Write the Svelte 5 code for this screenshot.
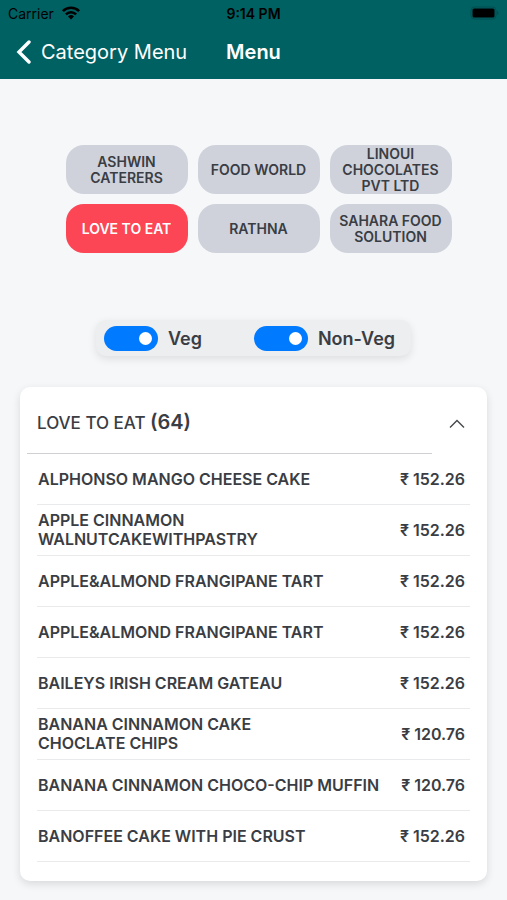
<script>
  const caterers = [
    'ASHWIN CATERERS',
    'FOOD WORLD',
    'LINOUI CHOCOLATES PVT LTD',
    'LOVE TO EAT',
    'RATHNA',
    'SAHARA FOOD SOLUTION'
  ];
  const items = [
    ['ALPHONSO MANGO CHEESE CAKE', '152.26'],
    ['APPLE CINNAMON\nWALNUTCAKEWITHPASTRY', '152.26'],
    ['APPLE&ALMOND FRANGIPANE TART', '152.26'],
    ['APPLE&ALMOND FRANGIPANE TART', '152.26'],
    ['BAILEYS IRISH CREAM GATEAU', '152.26'],
    ['BANANA CINNAMON CAKE\nCHOCLATE CHIPS', '120.76'],
    ['BANANA CINNAMON CHOCO-CHIP MUFFIN', '120.76'],
    ['BANOFFEE CAKE WITH PIE CRUST', '152.26']
  ];
  let selected = $state('LOVE TO EAT');
  let open = $state(true);
  let veg = $state(true);
  let nonVeg = $state(true);
</script>

<div class="screen">
  <header>
    <div class="status">
      <span class="carrier">
        Carrier
        <svg width="20" height="14" viewBox="0 0 20 14" aria-hidden="true">
          <g fill="none" stroke="#000" stroke-width="2.6">
            <path d="M1.9 5.1a11.5 11.5 0 0 1 16.2 0" />
            <path d="M4.9 8.3a7.2 7.2 0 0 1 10.2 0" />
          </g>
          <path d="M10 13.4 7 10.4a4.3 4.3 0 0 1 6 0z" />
        </svg>
      </span>
      <span class="time">9:14 PM</span>
      <svg class="battery" width="29" height="14" viewBox="0 0 29 14" aria-hidden="true">
        <rect x="1" y="1" width="25" height="12" rx="3.5" fill="none" stroke="#004d4f" />
        <rect x="2.5" y="2.5" width="22" height="9" rx="1.5" />
        <path d="M27 5v4q1.500-.6 1.500-2t-1.500-2z" fill="#004d4f" />
      </svg>
    </div>
    <nav>
      <a href="#categories">
        <svg width="15" height="24" viewBox="0 0 15 24" aria-hidden="true">
          <path d="M13 2 3 12 13 22" fill="none" stroke="#fff" stroke-width="3.4" stroke-linecap="round" stroke-linejoin="miter" />
        </svg>
        Category Menu
      </a>
      <h1>Menu</h1>
    </nav>
  </header>

  <main>
    <div class="caterers">
      {#each caterers as name}
        <button class="chip" class:active={name === selected} onclick={() => (selected = name)}>{name}</button>
      {/each}
    </div>

    <div class="filters">
      <label><input type="checkbox" bind:checked={veg} />Veg</label>
      <label><input type="checkbox" bind:checked={nonVeg} />Non-Veg</label>
    </div>

    <section class="card">
      <button class="heading" aria-expanded={open} onclick={() => (open = !open)}>
        <span class="title">LOVE TO EAT <span class="count">(64)</span></span>
        <svg class:closed={!open} width="16" height="10" viewBox="0 0 16 10" aria-hidden="true">
          <path d="M1 8.500 8 1.500 15 8.500" fill="none" stroke="#45484c" stroke-width="1.400" />
        </svg>
      </button>
      {#if open}
        <ul>
          {#each items as [name, price]}
            <li><span class="name">{name}</span><span class="price">₹ {price}</span></li>
          {/each}
        </ul>
      {/if}
    </section>
  </main>
</div>

<style>
  :global(body) {
    margin: 0;
    background: #f5f7f9;
  }
  .screen {
    font-family: Inter, 'Liberation Sans', sans-serif;
    color: #3a3d43;
  }
  button {
    font: inherit;
    color: inherit;
    border: 0;
    cursor: pointer;
  }
  header {
    background: #006163;
    padding-bottom: 1px;
  }
  .status,
  nav {
    display: grid;
    grid-template-columns: 1fr auto 1fr;
    align-items: center;
  }
  .status {
    height: 26px;
    padding: 0 8px;
    font-size: 14px;
    color: #000;
  }
  .carrier {
    display: flex;
    align-items: center;
    gap: 7px;
  }
  .time {
    font-weight: 600;
  }
  .battery {
    justify-self: end;
  }
  nav {
    height: 52px;
    padding: 0 16px;
    font-size: 20px;
    color: #fff;
  }
  nav a {
    display: flex;
    align-items: center;
    gap: 10px;
    color: inherit;
    text-decoration: none;
    white-space: nowrap;
  }
  h1 {
    margin: 0;
    font-size: 20px;
    font-weight: 600;
  }
  main {
    display: flex;
    flex-direction: column;
    align-items: center;
    padding: 66px 20px 19px;
  }
  .caterers {
    display: grid;
    grid-template-columns: repeat(3, 122px);
    grid-auto-rows: 49px;
    gap: 10px;
    margin-left: 10px;
  }
  .chip {
    padding: 0 8px;
    border-radius: 18px;
    background: #cfd2db;
    font-size: 14px;
    line-height: 16px;
    font-weight: 600;
  }
  .chip.active {
    background: #fc4555;
    color: #fff;
  }
  .filters {
    display: flex;
    gap: 52px;
    margin-top: 67px;
    padding: 6px 16px 5px 8px;
    border-radius: 10px;
    background: #eceeef;
    box-shadow: 0 3px 8px rgba(0, 0, 0, 0.1);
  }
  label {
    display: flex;
    align-items: center;
    gap: 10px;
    font-size: 18px;
    line-height: 25px;
    font-weight: 600;
  }
  input {
    appearance: none;
    display: flex;
    align-items: center;
    width: 54px;
    height: 25px;
    margin: 0;
    padding: 0 6px;
    box-sizing: border-box;
    border-radius: 13px;
    background: #a9adb5;
  }
  input::before {
    content: '';
    width: 13px;
    height: 13px;
    border-radius: 50%;
    background: #fff;
  }
  input:checked {
    justify-content: flex-end;
    background: #007aff;
  }
  .card {
    align-self: stretch;
    margin-top: 31px;
    padding-bottom: 19px;
    border-radius: 10px;
    background: #fff;
    box-shadow: 0 3px 8px rgba(0, 0, 0, 0.12);
  }
  .heading {
    display: flex;
    align-items: center;
    width: 100%;
    padding: 0 22px 0 7px;
    background: none;
    text-align: left;
  }
  .heading svg {
    margin-top: 6px;
  }
  .title {
    flex: 1;
    margin-right: 17px;
    padding: 22px 10px 17px;
    border-bottom: 1px solid #cfd0d3;
    font-size: 17px;
    line-height: 26px;
    font-weight: 500;
  }
  .count {
    font-size: 20px;
    font-weight: 600;
  }
  .closed {
    transform: rotate(180deg);
  }
  ul {
    margin: 0;
    padding: 0 17px;
    list-style: none;
  }
  li {
    display: flex;
    align-items: center;
    justify-content: space-between;
    gap: 20px;
    min-height: 50px;
    padding: 0 5px 0 1px;
    border-bottom: 1px solid #e9eaeb;
    font-size: 16px;
    line-height: 19px;
    font-weight: 600;
  }
  .name {
    white-space: pre-line;
  }
  .price {
    white-space: nowrap;
  }
</style>
